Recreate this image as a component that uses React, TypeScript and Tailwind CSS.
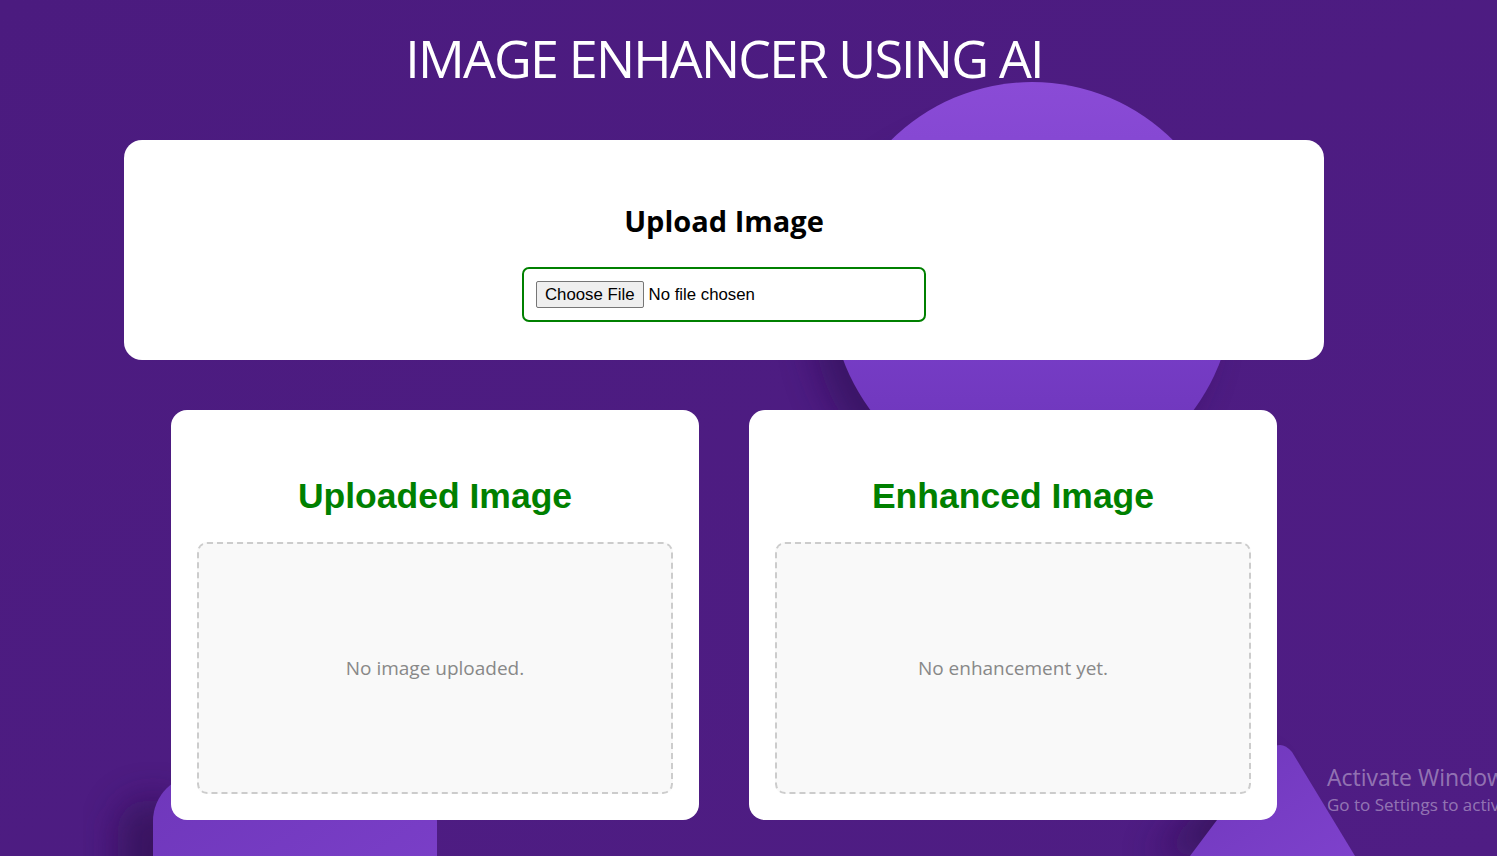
import React from 'react';

const Backdrop: React.FC = () => (
  <svg
    className="absolute inset-0 w-full h-full"
    viewBox="0 0 1497 856"
    preserveAspectRatio="none"
    aria-hidden="true"
  >
    <defs>
      <linearGradient id="bgFill" x1="0" y1="0" x2="1" y2="1">
        <stop offset="0" stopColor="#4b1b7f" />
        <stop offset="1" stopColor="#4f1d84" />
      </linearGradient>
      <linearGradient id="orb" x1="0" y1="0" x2="0" y2="1">
        <stop offset="0" stopColor="#8a4bd6" />
        <stop offset="0.55" stopColor="#7a3fca" />
        <stop offset="1" stopColor="#6a33b6" />
      </linearGradient>
      <linearGradient id="shape" x1="0" y1="0" x2="1" y2="1">
        <stop offset="0" stopColor="#6f37bb" />
        <stop offset="1" stopColor="#7e41cc" />
      </linearGradient>
      <filter id="soft" x="-50%" y="-50%" width="200%" height="200%">
        <feGaussianBlur stdDeviation="18" />
      </filter>
    </defs>
    <rect width="1497" height="856" fill="url(#bgFill)" />

    {/* big orb behind the upload card */}
    <ellipse cx="1010" cy="320" rx="196" ry="186" fill="#2c0d4f" opacity="0.55" filter="url(#soft)" />
    <ellipse cx="1032" cy="287" rx="202" ry="205" fill="url(#orb)" />

    {/* bottom-left block */}
    <rect x="118" y="800" width="70" height="120" rx="30" fill="#2a0c4a" opacity="0.6" filter="url(#soft)" />
    <rect x="153" y="775" width="284" height="200" rx="46" fill="url(#shape)" />

    {/* bottom-right wedge */}
    <path d="M1150 856 L1255 760 L1300 856 Z" fill="#2a0c4a" opacity="0.6" filter="url(#soft)" />
    <path d="M1190 856 L1268 752 Q1280 738 1292 752 L1355 856 Z" fill="url(#shape)" />
  </svg>
);

const PreviewCard: React.FC<{ title: string; empty: string }> = ({ title, empty }) => (
  <div className="w-[528px] h-[410px] bg-white rounded-[16px] px-[26px] pt-[64px] pb-[26px] flex flex-col">
    <h2 className="h-[44px] leading-[44px] text-center text-[35.5px] font-bold text-[#008000] font-['Liberation_Sans',Arial,sans-serif]">
      {title}
    </h2>
    <div className="mt-[24px] flex-1 rounded-[10px] border-2 border-dashed border-[#cccccc] bg-[#f9f9f9] flex items-center justify-center">
      <p className="text-[19px] text-[#888888] font-['Open_Sans',sans-serif]">{empty}</p>
    </div>
  </div>
);

const App: React.FC = () => {
  return (
    <div className="relative h-[856px] w-full overflow-hidden bg-[#4c1b80]">
      <Backdrop />

      <div className="relative w-[1448px] flex flex-col items-center">
        <h1 className="mt-[26px] h-[64px] leading-[64px] text-[52px] text-white font-normal tracking-[-1.8px] font-['Open_Sans',sans-serif]">
          IMAGE ENHANCER USING AI
        </h1>

        {/* upload panel */}
        <div className="mt-[50px] w-[1200px] h-[220px] bg-white rounded-[18px] pt-[61px] flex flex-col items-center">
          <h2 className="h-[40px] leading-[40px] text-[29px] font-bold text-black font-['Open_Sans',sans-serif]">
            Upload Image
          </h2>
          <div className="mt-[26px] w-[404px] h-[55px] border-2 border-[#008000] rounded-[7px] px-[12px] flex items-center">
            <input
              type="file"
              accept="image/*"
              className="text-[16.8px] text-black font-['Liberation_Sans',Arial,sans-serif] file:mr-[5px] file:h-[27px] file:px-[8px] file:border file:border-[#767676] file:rounded-[2px] file:bg-[#efefef] file:text-black"
            />
          </div>
        </div>

        {/* previews */}
        <div className="mt-[50px] flex gap-[50px]">
          <PreviewCard title="Uploaded Image" empty="No image uploaded." />
          <PreviewCard title="Enhanced Image" empty="No enhancement yet." />
        </div>
      </div>

      {/* OS watermark over the page */}
      <div className="absolute left-[1327px] top-[760px] whitespace-nowrap text-white/40 font-['Open_Sans',sans-serif]">
        <div className="text-[23px] leading-[34px]">Activate Windows</div>
        <div className="text-[17px] leading-[22px]">Go to Settings to activate Windows.</div>
      </div>
    </div>
  );
};

export default App;
